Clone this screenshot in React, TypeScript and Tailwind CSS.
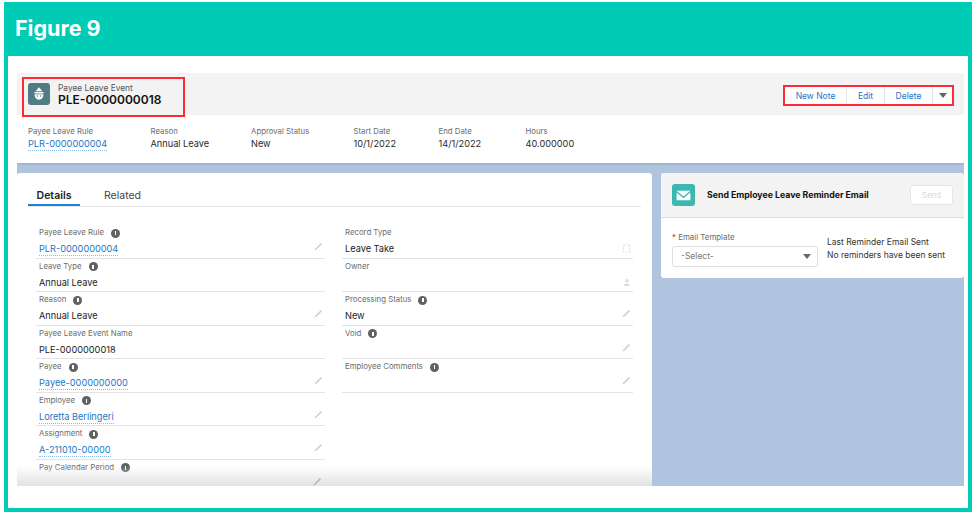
const sans = "font-['Inter','Liberation_Sans',sans-serif]";

type Field = {
  label: string;
  value?: string;
  link?: boolean;
  info?: boolean;
  icon?: "pencil" | "swap" | "owner" | "none";
};

const leftFields: Field[] = [
  { label: "Payee Leave Rule", value: "PLR-0000000004", link: true, info: true, icon: "pencil" },
  { label: "Leave Type", value: "Annual Leave", info: true, icon: "none" },
  { label: "Reason", value: "Annual Leave", info: true, icon: "pencil" },
  { label: "Payee Leave Event Name", value: "PLE-0000000018", icon: "none" },
  { label: "Payee", value: "Payee-0000000000", link: true, info: true, icon: "pencil" },
  { label: "Employee", value: "Loretta Berlingeri", link: true, info: true, icon: "pencil" },
  { label: "Assignment", value: "A-211010-00000", link: true, info: true, icon: "pencil" },
];

const rightFields: Field[] = [
  { label: "Record Type", value: "Leave Take", icon: "swap" },
  { label: "Owner", icon: "owner" },
  { label: "Processing Status", value: "New", info: true, icon: "pencil" },
  { label: "Void", info: true, icon: "pencil" },
  { label: "Employee Comments", info: true, icon: "pencil" },
];

const highlights = [
  { label: "Payee Leave Rule", value: "PLR-0000000004", width: "w-[122.5px]", link: true },
  { label: "Reason", value: "Annual Leave", width: "w-[100.5px]" },
  { label: "Approval Status", value: "New", width: "w-[102.5px]" },
  { label: "Start Date", value: "10/1/2022", width: "w-[85px]" },
  { label: "End Date", value: "14/1/2022", width: "w-[87px]" },
  { label: "Hours", value: "40.000000", width: "w-[80px]" },
];

function InfoDot() {
  return (
    <span className="ml-[7px] flex h-[9px] w-[9px] items-center justify-center rounded-full bg-[#5f6163]">
      <span className="h-[4px] w-[1.5px] bg-white" />
    </span>
  );
}

function PencilMark({ className }: { className?: string }) {
  return (
    <svg viewBox="0 0 10 10" className={className} fill="currentColor">
      <path d="M.5 9.500 1.300 7.400 7.600 1.100 8.900 2.400 2.600 8.700z" />
    </svg>
  );
}

function RowIcon({ icon }: { icon?: Field["icon"] }) {
  if (icon === "pencil") {
    return <PencilMark className="-mr-[1px] mb-[4px] h-[9px] w-[9px] text-[#cfcfcf]" />;
  }
  if (icon === "swap") {
    return (
      <svg viewBox="0 0 10 10" className="-mr-[1px] h-[9px] w-[9px] text-[#e2e2e2]" fill="none" stroke="currentColor" strokeWidth="1.2">
        <path d="M4 1H1.500v8H4M6 1h2.500v8H6" strokeDasharray="2 1" />
      </svg>
    );
  }
  if (icon === "owner") {
    return (
      <svg viewBox="0 0 10 10" className="-mr-[1px] h-[9px] w-[9px] text-[#dedede]" fill="currentColor">
        <circle cx="5.500" cy="3" r="2" />
        <path d="M1.500 9c.4-2.200 1.800-3 4-3s3 1 3 3z" />
      </svg>
    );
  }
  return null;
}

function FieldRow({ field }: { field: Field }) {
  return (
    <div className="h-[33.5px] border-b border-[#e3e3e3] px-[3px]">
      <div className="flex h-[14px] items-center pt-[2px] text-[7.8px] leading-none text-[#6c6c6c]">
        {field.label}
        {field.info && <InfoDot />}
      </div>
      <div className="flex h-[19px] items-center justify-between">
        <span
          className={
            field.link
              ? "mt-[2px] border-b border-dotted border-[#8bbbe3] text-[9.2px] leading-[12px] text-[#1b76c4]"
              : "mt-[1px] text-[9.2px] leading-[12px] text-[#1c1c1c]"
          }
        >
          {field.value}
        </span>
        <RowIcon icon={field.icon} />
      </div>
    </div>
  );
}

function ActionButton({ children, last }: { children: React.ReactNode; last?: boolean }) {
  return (
    <span
      className={
        "flex h-full items-center justify-center pt-[1px] text-[8.5px] text-[#1b76c4] " +
        (last ? "" : "border-r border-[#e6e6e6]")
      }
    >
      {children}
    </span>
  );
}

export default function App() {
  return (
    <div className={`h-[516px] w-[976px] overflow-hidden bg-white px-[4px] pb-[4px] pt-[2px] ${sans}`}>
      <div className="flex h-[510px] w-[968px] flex-col border-x-[4px] border-b-[4px] border-[#00cbb5] bg-white">
        {/* Figure title */}
        <div className="-mx-[4px] flex h-[54px] shrink-0 items-center bg-[#00cbb5] pl-[11px]">
          <h1 className="text-[21.5px] font-bold leading-none text-white">Figure 9</h1>
        </div>

        <div className="flex min-h-0 flex-1 flex-col pb-[22px] pl-[9px] pr-[4px] pt-[17px]">
          {/* Record header */}
          <div className="flex h-[42px] shrink-0 items-start justify-between bg-[#f3f3f3] pl-[5px] pr-[10px]">
            <div className="mt-[4px] flex h-[39.5px] w-[163px] items-start gap-[8px] border-2 border-red-500 pl-[4px] pt-[4px]">
              <div className="flex h-[22px] w-[22px] items-center justify-center rounded-[3px] bg-[#4f7d83]">
                <svg viewBox="0 0 14 14" className="h-[16px] w-[16px]" fill="white">
                  <path d="M7 1 10 4.600H4z" />
                  <path d="M2.600 5.200h8.800L10.500 6.600h-7z" />
                  <path d="M3.200 7.200h7.600c.2 2.500-1.400 4.800-3.800 4.800S3 9.700 3.200 7.200z" />
                  <circle cx="5.600" cy="8.800" r=".7" fill="#4f7d83" />
                  <circle cx="8.400" cy="8.800" r=".7" fill="#4f7d83" />
                </svg>
              </div>
              <div className="-mt-[0.5px]">
                <div className="text-[8.4px] leading-[11px] text-[#555]">Payee Leave Event</div>
                <div className="-mt-[1px] text-[12px] font-semibold leading-[14px] text-[#111]">PLE-0000000018</div>
              </div>
            </div>

            <div className="mt-[12px] flex h-[21px] w-[171px] border-2 border-red-500 bg-white">
              <div className="w-[62px]"><ActionButton>New Note</ActionButton></div>
              <div className="w-[38px]"><ActionButton>Edit</ActionButton></div>
              <div className="w-[48px]"><ActionButton>Delete</ActionButton></div>
              <span className="flex flex-1 items-center justify-center">
                <span className="h-0 w-0 border-x-[4px] border-t-[5px] border-x-transparent border-t-[#666]" />
              </span>
            </div>
          </div>

          {/* Highlights */}
          <div className="flex h-[48px] shrink-0 items-start pl-[11px] pt-[10px]">
            {highlights.map((h) => (
              <div key={h.label} className={h.width}>
                <div className="text-[7.8px] leading-[12px] text-[#6c6c6c]">{h.label}</div>
                <div className="mt-[1px] flex">
                  <span
                    className={
                      h.link
                        ? "border-b border-dotted border-[#8bbbe3] text-[9.2px] leading-[12px] text-[#1b76c4]"
                        : "text-[9.2px] leading-[12px] text-[#2a2a2a]"
                    }
                  >
                    {h.value}
                  </span>
                </div>
              </div>
            ))}
          </div>

          {/* Page body */}
          <div className="flex min-h-0 flex-1 items-start gap-[9px] border-t-2 border-[#a3b6cf] bg-[#b0c4df] pt-[8px]">
            <div className="relative h-[313px] w-[635px] shrink-0 overflow-hidden rounded-t-[3px] bg-white px-[11px]">
              <div className="flex h-[34px] items-end border-b border-[#e6e6e6]">
                <span className="flex h-[24px] w-[52px] items-start justify-center border-b-2 border-[#1b82d8] pt-[6px] text-[10.500px] font-semibold leading-[15px] text-[#222]">
                  Details
                </span>
                <span className="ml-[24px] flex h-[24px] items-start pt-[6px] text-[10.500px] leading-[15px] text-[#444]">Related</span>
              </div>

              <div className="mt-[18px] grid grid-cols-[289px_291px] gap-x-[17px] pl-[8px]">
                <div>
                  {leftFields.map((f) => (
                    <FieldRow key={f.label} field={f} />
                  ))}
                  <div className="h-[33.500px] px-[3px]">
                    <div className="flex h-[14px] items-center pt-[2px] text-[7.800px] leading-none text-[#6c6c6c]">
                      Pay Calendar Period
                      <InfoDot />
                    </div>
                  </div>
                </div>
                <div>
                  {rightFields.map((f) => (
                    <FieldRow key={f.label} field={f} />
                  ))}
                </div>
              </div>

              {/* screenshot fade at the cut edge */}
              <div className="absolute bottom-0 left-0 right-0 h-[20px] bg-gradient-to-b from-white/0 to-[#e2e2e2]" />
              <PencilMark className="absolute bottom-[0px] left-[296px] h-[9px] w-[9px] text-[#b5b5b5]" />
            </div>

            <div className="flex-1 overflow-hidden rounded-[3px] bg-white">
              <div className="flex h-[45px] items-center border-b border-[#dddddd] bg-[#f3f3f3] px-[11px]">
                <div className="flex h-[22px] w-[23px] items-center justify-center rounded-[3px] bg-[#3db8b1]">
                  <svg viewBox="0 0 16 16" className="h-[17px] w-[17px]" fill="white">
                    <path d="M1.500 3.500h13L8 9z" />
                    <path d="M1.500 5.200 8 10.600l6.500-5.400v7.300h-13z" />
                  </svg>
                </div>
                <span className="ml-[12px] flex-1 pt-[1px] text-[8.750px] font-bold text-[#111]">Send Employee Leave Reminder Email</span>
                <span className="flex h-[20px] w-[43px] items-center justify-center rounded-[3px] border border-[#e6e6e6] bg-white text-[8px] text-[#d9d9d9]">
                  Send
                </span>
              </div>
              <div className="flex h-[60px] pl-[11px] pt-[14px]">
                <div className="w-[146px]">
                  <div className="text-[7.900px] leading-[11px] text-[#6c6c6c]">
                    <span className="text-[#d2222d]">*</span> Email Template
                  </div>
                  <div className="mt-[3px] flex h-[21px] items-center justify-between rounded-[3px] border border-[#dedede] bg-white pl-[8px] pr-[6px] text-[8.500px] text-[#777]">
                    -Select-
                    <span className="h-0 w-0 border-x-[4px] border-t-[5px] border-x-transparent border-t-[#666]" />
                  </div>
                </div>
                <div className="ml-[9px] pt-[4px] text-[8.500px] leading-[13px] text-[#333]">
                  <div>Last Reminder Email Sent</div>
                  <div>No reminders have been sent</div>
                </div>
              </div>
            </div>
          </div>
        </div>
      </div>
    </div>
  );
}
